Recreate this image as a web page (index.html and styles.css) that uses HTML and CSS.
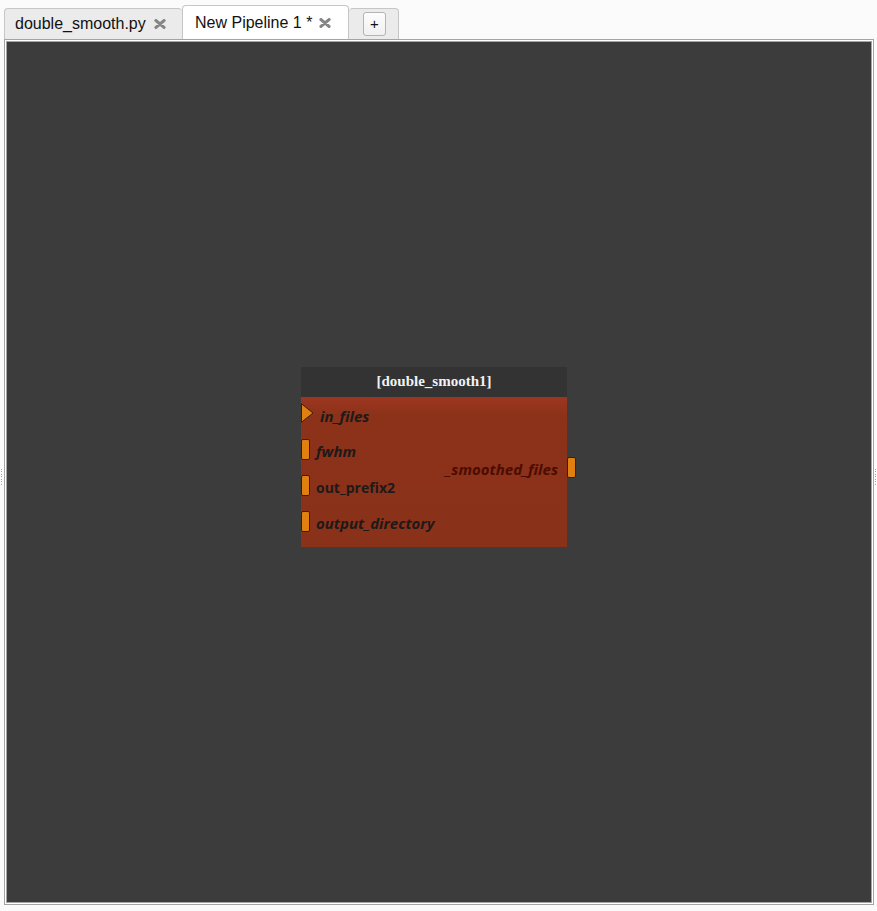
FILE: index.html
```html
<!DOCTYPE html>
<html>
<head>
<meta charset="utf-8">
<title>Pipeline</title>
<link rel="stylesheet" href="styles.css">
</head>
<body>
<div class="tabbar">
  <div class="tab">
    <span class="tab-label">double_smooth.py</span>
    <svg class="close" width="12" height="10" viewBox="0 0 12 10"><path d="M2 1.6 L10 8.4 M10 1.6 L2 8.4" /></svg>
  </div>
  <div class="tab active">
    <span class="tab-label">New Pipeline 1 *</span>
    <svg class="close" width="12" height="10" viewBox="0 0 12 10"><path d="M2 1.6 L10 8.4 M10 1.6 L2 8.4" /></svg>
  </div>
  <div class="tab add">
    <div class="add-btn">+</div>
  </div>
</div>
<div class="main">
  <div class="side side-left"><div class="grip"></div></div>
  <div class="frame">
    <div class="canvas">
      <div class="node">
        <div class="node-title">[double_smooth1]</div>
        <div class="node-body">
          <div class="inputs">
            <div class="plug"><svg class="tri" width="13" height="20" viewBox="0 0 13 20"><path d="M0.5 0.8 L12 10 L0.5 19.2 Z"/></svg><span class="label italic tri-label">in_files</span></div>
            <div class="plug"><span class="port"></span><span class="label italic">fwhm</span></div>
            <div class="plug"><span class="port"></span><span class="label">out_prefix2</span></div>
            <div class="plug"><span class="port"></span><span class="label italic">output_directory</span></div>
          </div>
          <div class="outputs">
            <div class="plug out"><span class="label italic out-label">_smoothed_files</span><span class="port"></span></div>
          </div>
        </div>
      </div>
    </div>
  </div>
  <div class="side side-right"><div class="grip"></div></div>
</div>
</body>
</html>
```

FILE: styles.css
```css
html, body {
  margin: 0;
  padding: 0;
}
body {
  width: 877px;
  height: 911px;
  background: #fbfbfb;
  font-family: "Liberation Sans", Arial, sans-serif;
  overflow: hidden;
}
.tabbar {
  height: 39px;
  display: flex;
  align-items: flex-end;
  padding-left: 4px;
  box-sizing: border-box;
}
.tab {
  box-sizing: border-box;
  height: 31px;
  display: flex;
  align-items: flex-start;
  gap: 8px;
  background: #ebebeb;
  border-top: 1px solid #c6c6c6;
  border-left: 1px solid #c6c6c6;
  border-radius: 4px 4px 0 0;
  padding: 6px 0 0 10px;
  width: 178px;
  font-size: 16px;
  line-height: 18px;
  color: #111;
}
.tab.active {
  width: 167px;
  height: 34px;
  background: #ffffff;
  border-right: 1px solid #c6c6c6;
  padding: 8px 0 0 12px;
  gap: 7px;
}
.tab.add {
  width: 50px;
  border-left: none;
  border-right: 1px solid #c6c6c6;
  padding: 3px 0 0 14px;
}
.tab-label {
  white-space: nowrap;
}
.close {
  margin-top: 4px;
  flex: none;
}
.close path {
  stroke: #858585;
  stroke-width: 3.2;
  stroke-linecap: round;
  fill: none;
}
.add-btn {
  box-sizing: border-box;
  width: 23px;
  height: 24px;
  border: 1px solid #b4b4b4;
  border-radius: 3px;
  background: linear-gradient(#fdfdfd, #f0f0f0);
  font-size: 15px;
  line-height: 22px;
  text-align: center;
  color: #111;
}
.main {
  display: flex;
  height: 866px;
}
.side {
  display: flex;
  align-items: center;
}
.side-left {
  width: 4px;
  padding-left: 1px;
  box-sizing: border-box;
}
.side-right {
  width: 3px;
  padding-left: 1px;
  box-sizing: border-box;
}
.grip {
  width: 1px;
  height: 17px;
  margin-top: 10px;
  background: repeating-linear-gradient(to bottom, #a0a0a0 0 1px, transparent 1px 2.5px);
}
.frame {
  width: 870px;
  height: 866px;
  box-sizing: border-box;
  border: 3px double #a4a4a4;
  background: #ffffff;
}
.canvas {
  position: relative;
  width: 100%;
  height: 100%;
  background: #3c3c3c;
  overflow: hidden;
}
.node {
  position: absolute;
  left: 294px;
  top: 325px;
  width: 266px;
}
.node-title {
  height: 30px;
  background: #333333;
  color: #f2f2f2;
  font-family: "Liberation Serif", "Times New Roman", serif;
  font-weight: bold;
  font-size: 15px;
  line-height: 29px;
  text-align: center;
}
.node-body {
  height: 150px;
  background: linear-gradient(#9d3620 0, #8c3219 18px, #8a3119 100%);
  display: flex;
  justify-content: space-between;
}
.inputs {
  display: flex;
  flex-direction: column;
  margin-top: -2px;
}
.plug {
  height: 36px;
  display: flex;
  align-items: center;
  gap: 6px;
}
.port {
  box-sizing: border-box;
  width: 9px;
  height: 21px;
  background: #e2800f;
  border: 1px solid #3a2008;
  border-radius: 2px;
  flex: none;
}
.tri {
  flex: none;
}
.tri path {
  fill: #e2800f;
  stroke: #3a2008;
  stroke-width: 1;
}
.label {
  font-family: "Open Sans", "Noto Sans", sans-serif;
  font-weight: bold;
  font-size: 14px;
  color: #1d1a19;
  padding-top: 5px;
  white-space: nowrap;
}
.italic {
  font-style: italic;
  font-size: 15px;
  padding-top: 4px;
}
.tri-label {
  padding-top: 6px;
}
.outputs {
  display: flex;
  flex-direction: column;
  padding-top: 52px;
  margin-right: -9px;
}
.plug.out {
  gap: 9px;
}
.out-label {
  color: #4c0c02;
}
```
